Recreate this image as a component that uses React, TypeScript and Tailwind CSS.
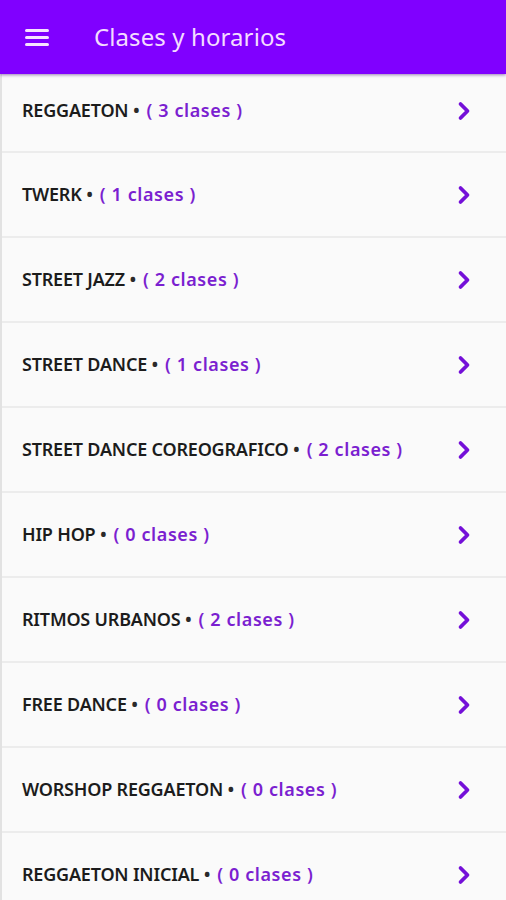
import { ChevronRight } from 'lucide-react';

const CLASSES = [
  { name: 'REGGAETON', count: 3 },
  { name: 'TWERK', count: 1 },
  { name: 'STREET JAZZ', count: 2 },
  { name: 'STREET DANCE', count: 1 },
  { name: 'STREET DANCE COREOGRAFICO', count: 2 },
  { name: 'HIP HOP', count: 0 },
  { name: 'RITMOS URBANOS', count: 2 },
  { name: 'FREE DANCE', count: 0 },
  { name: 'WORSHOP REGGAETON', count: 0 },
  { name: 'REGGAETON INICIAL', count: 0 },
];

export default function App() {
  return (
    <div className="h-[900px] overflow-hidden bg-[#fafafa] font-['Noto_Sans',sans-serif]">
      <header className="relative z-10 flex h-[74px] items-center bg-[#8000ff] shadow-[0_1px_3px_rgba(60,0,120,0.5)]">
        <button type="button" aria-label="Menú" className="ml-[25px] flex w-[24px] flex-col gap-[4px]">
          <span className="h-[3px] w-full rounded-full bg-[#f6e3ff]" />
          <span className="h-[3px] w-full rounded-full bg-[#f6e3ff]" />
          <span className="h-[3px] w-full rounded-full bg-[#f6e3ff]" />
        </button>
        <h1 className="ml-[45px] text-[24px] font-normal tracking-[0.1px] text-[#f3dcff]">Clases y horarios</h1>
      </header>

      <ul className="border-l-2 border-[#e2e2e2]">
        {CLASSES.map((c, i) => (
          <li
            key={c.name}
            className={`flex items-center justify-between border-b-2 border-[#ececec] pl-[20px] pr-[28px] ${
              i === 0 ? 'h-[79px] pb-[4px]' : 'h-[85px]'
            }`}
          >
            <p className="text-[18px] font-semibold tracking-[-0.2px] text-[#1c1c1c]">
              {c.name} <span className="text-[#2a2a2a]">•</span>
              <span className="ml-[7px] tracking-[0.6px] text-[#7b1fd0]">( {c.count} clases )</span>
            </p>
            <ChevronRight className="h-[28px] w-[28px] text-[#7410d8]" strokeWidth={3.2} />
          </li>
        ))}
      </ul>
    </div>
  );
}
